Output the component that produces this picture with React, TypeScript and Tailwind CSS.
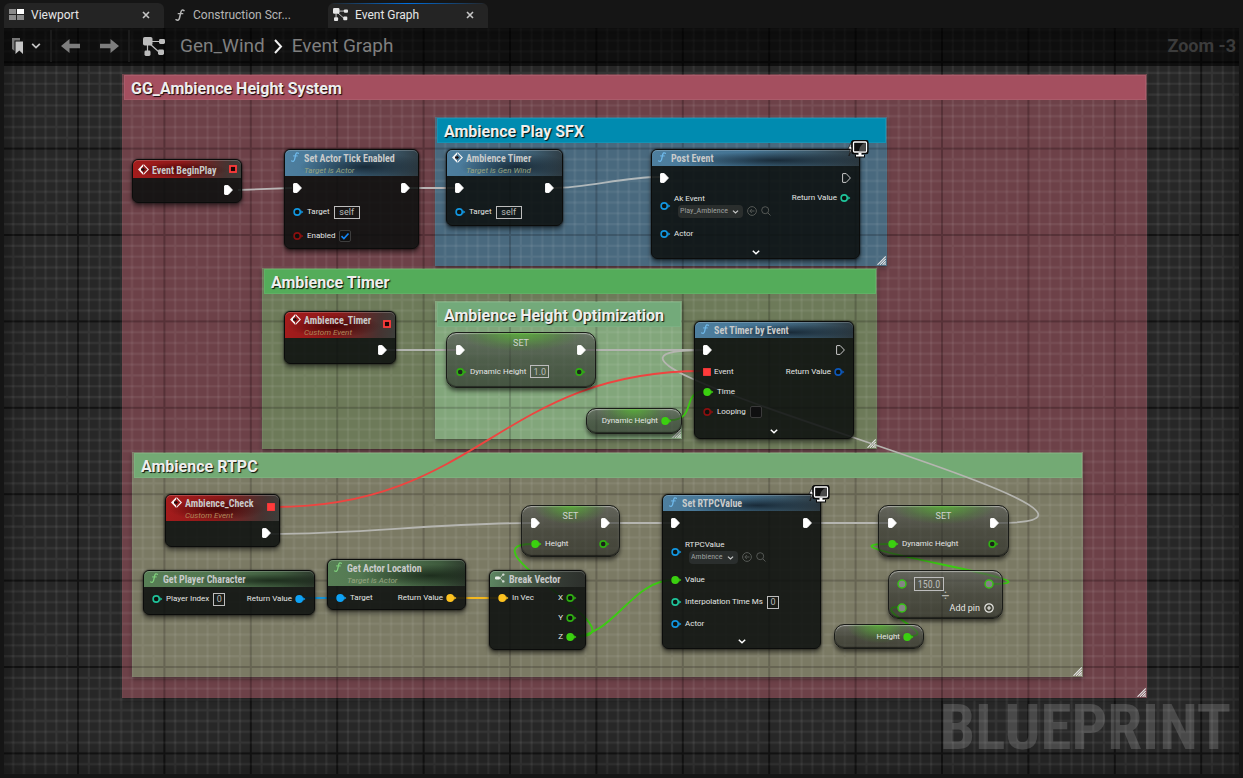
import type { ReactNode } from 'react';

const CONDENSED = "font-['Roboto_Condensed',Roboto,sans-serif]";

/* ---------- icons ---------- */

function GraphIcon({ className }: { className: string }) {
  return (
    <svg viewBox="0 0 22 19" className={className} fill="currentColor" aria-hidden="true">
      <path d="M8 4.5h9M7 7l9 8M4.5 8v6" stroke="currentColor" strokeWidth="1.2" fill="none" />
      <rect x="0" y="0" width="9.5" height="8.5" rx="1.8" />
      <rect x="16" y="2" width="6" height="5" rx="1.4" />
      <rect x="1.5" y="13.5" width="6" height="5.5" rx="1.4" />
      <rect x="15" y="12.5" width="6" height="5.5" rx="1.4" />
    </svg>
  );
}

function FunctionIcon({ className }: { className: string }) {
  return (
    <svg viewBox="0 0 10 12" className={className} fill="none" stroke="currentColor" strokeWidth="1.5" strokeLinecap="round" aria-hidden="true">
      <path d="M9 1.6C7.6.4 6.3 1 5.9 3L4.5 9c-.4 2-1.8 2.7-3.5 1.7" />
      <path d="M3.2 4.7h4.6" strokeWidth="1.2" />
    </svg>
  );
}

function EventIcon() {
  return (
    <svg viewBox="0 0 11 11" className="-mr-px h-[11px] w-[11px] shrink-0" aria-hidden="true">
      <path d="M5 .3 0 5.500 5 10.700V8.200L3 6.300V4.700L5 2.800z" fill="#f4f4f4" />
      <path d="M5.500 .7 10.300 5.500 5.500 10.300" fill="none" stroke="#f4f4f4" strokeWidth="1.100" />
      <path d="M3 4.700h1.600V3.200L7 5.500 4.600 7.800V6.300H3z" fill="#1d0c0c" />
    </svg>
  );
}

function BreakIcon() {
  return (
    <svg viewBox="0 0 10 10" className="h-2.5 w-2.5 shrink-0" aria-hidden="true">
      <rect x="0" y="3.6" width="5" height="2.8" rx="1.2" fill="#e8efe8" />
      <path d="M5 5 8 1.5M5 5l3 3.5" stroke="#b9c4b9" strokeWidth="1" />
      <circle cx="8.3" cy="1.6" r="1.2" fill="#d4ddd4" />
      <circle cx="8.3" cy="8.4" r="1.2" fill="#d4ddd4" />
    </svg>
  );
}

function Chevron({ className }: { className: string }) {
  return (
    <svg viewBox="0 0 8 5" className={className} fill="none" stroke="currentColor" strokeWidth="1.5" aria-hidden="true">
      <path d="m.8.8 3.2 3L7.2.8" />
    </svg>
  );
}

function ExecPin({ hollow = false }: { hollow?: boolean }) {
  return (
    <svg viewBox="0 0 9 10" className="h-2.5 w-[9px] shrink-0" aria-hidden="true">
      <path
        d="M1 .6h3.2L8.4 5 4.2 9.4H1a.4.4 0 0 1-.4-.4V1A.4.4 0 0 1 1 .6z"
        fill={hollow ? 'none' : '#fff'}
        stroke={hollow ? '#c9c9c9' : '#fff'}
        strokeWidth="1"
      />
    </svg>
  );
}

function Pin({ color, filled = false }: { color: string; filled?: boolean }) {
  return (
    <svg viewBox="0 0 11 8" className="h-2 w-[11px] shrink-0" aria-hidden="true">
      <circle cx="4.2" cy="4" r="3.1" fill={filled ? color : '#0a0f0c'} fillOpacity={filled ? 1 : 0.7} stroke={color} strokeWidth="1.6" />
      <path d="M8.2 2.2 10.4 4 8.2 5.8z" fill={color} />
    </svg>
  );
}

function WildPin() {
  return (
    <svg viewBox="0 0 10 10" className="h-2.5 w-2.5 shrink-0" aria-hidden="true">
      <circle cx="5" cy="5" r="4" fill="#858585" stroke="#35c412" strokeWidth="1.4" />
    </svg>
  );
}

function DelegatePin({ filled = false }: { filled?: boolean }) {
  return (
    <svg viewBox="0 0 8 8" className="h-2 w-2 shrink-0" aria-hidden="true">
      <rect x="1" y="1" width="6" height="6" fill={filled ? '#ff3b3b' : '#1d0606'} stroke="#ff3b3b" strokeWidth="1.8" />
    </svg>
  );
}

function Grip() {
  return (
    <svg viewBox="0 0 9 9" className="absolute right-px bottom-px z-20 h-[9px] w-[9px]" stroke="#e9e9e9" strokeWidth="1.1" aria-hidden="true">
      <path d="M.5 8.8 8.8.5M3 8.8 8.8 3M5.500 8.800l3.300-3.300M7.600 8.800l1.200-1.200" />
    </svg>
  );
}

function ServerBadge() {
  return (
    <svg viewBox="0 0 22 18" className="absolute -top-[10px] -right-[10px] h-[18px] w-[22px]" aria-hidden="true">
      <path d="M5 1 1 9h2.4L2 16l4-9H4z" fill="#fff" stroke="#111" strokeWidth=".8" />
      <rect x="5" y=".6" width="16" height="13" rx="1.6" fill="#0c0c0c" stroke="#080808" strokeWidth="1.200" />
      <path d="M10.500 12.500h5v2.300h2.500v2.700H8v-2.700h2.500z" fill="#080808" />
      <rect x="6.5" y="2" width="13" height="10" rx="1" fill="#101010" stroke="#fff" strokeWidth="1.3" />
      <path d="M12 11.300c.5-4.500 2.500-7.500 6.800-8.500v8.500z" fill="#4a4a4a" />
      <path d="M11.500 12.800h3v2h2.500v1.800h-8v-1.800h2.500z" fill="#fff" />
    </svg>
  );
}

/* ---------- node building blocks ---------- */

type Tone = 'event' | 'call' | 'pure' | 'plain';

const TONES: Record<Tone, string> = {
  event:
    'bg-[radial-gradient(ellipse_at_45%_55%,rgba(50,0,0,0.75),transparent_55%),linear-gradient(100deg,#a51c1c_0%,#8e1919_45%,#473331_85%,#3c3f3b_100%)]',
  call:
    'bg-[radial-gradient(ellipse_at_60%_65%,rgba(18,32,44,0.85),transparent_58%),linear-gradient(100deg,#4e7f9f_0%,#447392_45%,#3c5a6c_75%,#2d3940_100%)]',
  pure:
    'bg-[radial-gradient(ellipse_at_75%_60%,rgba(18,30,18,0.75),transparent_50%),linear-gradient(100deg,#587f56_0%,#4f724d_50%,#3e5a3d_80%,#2c382c_100%)]',
  plain: 'bg-[linear-gradient(100deg,#5e8762_0%,#4a604b_35%,#353c35_70%,#2c2f2b_100%)]',
};

interface NodeProps {
  place: string;
  tone: Tone;
  icon: ReactNode;
  title: string;
  subtitle?: string;
  tall?: boolean;
  corner?: ReactNode;
  badge?: boolean;
  expandable?: boolean;
  children: ReactNode;
}

function Node({ place, tone, icon, title, subtitle, tall, corner, badge, expandable, children }: NodeProps) {
  const height = subtitle ? 'h-[26px]' : tall ? 'h-[18px]' : 'h-4';
  const subtitleColor = tone === 'event' ? 'text-[#b08a5c]' : 'text-[#98a581]';
  return (
    <article
      className={`absolute z-30 flex flex-col rounded-md border border-[#0b0c0b] bg-[#0c0f0e]/87 shadow-[0_3px_5px_rgba(0,0,0,0.55),0_0_2px_rgba(0,0,0,0.8)] ${place}`}
    >
      <header className={`flex shrink-0 justify-between rounded-t-[5px] pr-1 pl-[5px] shadow-[inset_0_1px_0_rgba(255,255,255,0.2)] ${height} ${TONES[tone]}`}>
        <div className={`flex gap-1 ${tall ? 'pt-1' : 'pt-0.5'}`}>
          {icon}
          <div>
            <h3 className={`${CONDENSED} text-[10px] leading-[13px] font-bold whitespace-nowrap text-[#c9cbcb]`}>{title}</h3>
            {subtitle && <p className={`text-[8px] leading-[11px] whitespace-nowrap italic ${subtitleColor}`}>{subtitle}</p>}
          </div>
        </div>
        {corner}
      </header>
      <div className="flex flex-1 flex-col px-2">{children}</div>
      {expandable && (
        <button type="button" aria-label={`Expand ${title}`} className="flex h-3.5 items-center justify-center text-white">
          <Chevron className="h-[5px] w-2" />
        </button>
      )}
      {badge && <ServerBadge />}
    </article>
  );
}

function Row({ size = 'h-6', left, right }: { size?: string; left?: ReactNode; right?: ReactNode }) {
  return (
    <div className={`flex shrink-0 items-center justify-between ${size}`}>
      <div className="flex items-center gap-[3px]">{left}</div>
      <div className="flex items-center gap-[3px]">{right}</div>
    </div>
  );
}

function Label({ htmlFor, children }: { htmlFor?: string; children: ReactNode }) {
  const style = 'text-[8px] leading-3 whitespace-nowrap text-[#e4e6e4]';
  return htmlFor ? (
    <label htmlFor={htmlFor} className={style}>
      {children}
    </label>
  ) : (
    <span className={style}>{children}</span>
  );
}

function Field({ id, value, size }: { id: string; value: string; size: string }) {
  return (
    <input
      id={id}
      defaultValue={value}
      className={`ml-px h-[13px] border border-[#bdbdbd] bg-transparent p-0 text-center text-[9px] leading-3 text-[#b9bbb9] outline-none ${size}`}
    />
  );
}

function AssetPicker({ id, label, value, size }: { id: string; label: string; value: string; size: string }) {
  return (
    <div className="flex flex-col pb-0.5">
      <Label htmlFor={id}>{label}</Label>
      <div className="flex items-center gap-1 pl-1 text-[#555855]">
        <div className={`relative h-[13px] rounded-sm bg-[#2a2e2d] ${size}`}>
          <select
            id={id}
            defaultValue={value}
            className={`${CONDENSED} block h-full w-full appearance-none bg-transparent pl-0.5 text-[8px] leading-3 text-[#9b9f9d] outline-none`}
          >
            <option>{value}</option>
          </select>
          <Chevron className="pointer-events-none absolute top-[5px] right-1 h-1 w-[7px] text-[#c8caca]" />
        </div>
        <button type="button" aria-label={`Use selected asset for ${label}`}>
          <svg viewBox="0 0 10 10" className="h-2.5 w-2.5" fill="none" stroke="currentColor" aria-hidden="true">
            <circle cx="5" cy="5" r="4.400" />
            <path d="M7.500 5H3M4.800 3 2.800 5l2 2" />
          </svg>
        </button>
        <button type="button" aria-label={`Browse to ${label}`}>
          <svg viewBox="0 0 10 10" className="h-2.5 w-2.5" fill="none" stroke="currentColor" aria-hidden="true">
            <circle cx="4.200" cy="4.200" r="3.500" />
            <path d="m6.800 6.800 2.700 2.700" />
          </svg>
        </button>
      </div>
    </div>
  );
}

function GlassNode({ place, children, glow = true }: { place: string; children: ReactNode; glow?: boolean }) {
  return (
    <article
      className={`absolute z-30 flex flex-col overflow-hidden rounded-[10px] border border-[#1a1c18] bg-linear-to-b from-[#5a5c58]/70 via-[#2c2e2a]/60 to-[#1c1e1a]/60 shadow-[0_3px_4px_rgba(0,0,0,0.55),inset_0_1px_1px_rgba(255,255,255,0.45),inset_0_-1px_1px_rgba(0,0,0,0.5)] ${place}`}
    >
      {glow && (
        <div className="pointer-events-none absolute inset-x-3 top-0 h-[18px] bg-[radial-gradient(ellipse_at_50%_0%,rgba(84,190,44,0.7),rgba(70,150,40,0.25)_50%,transparent_72%)]" />
      )}
      <div className="relative flex flex-1 flex-col">{children}</div>
    </article>
  );
}

function SetNode({ place, left, right }: { place: string; left: ReactNode; right: ReactNode }) {
  return (
    <GlassNode place={place}>
      <div className="relative flex h-[26px] shrink-0 items-end justify-between px-[9px] pb-1">
        <ExecPin />
        <h3 className="absolute inset-x-0 top-1 text-center text-[9px] leading-3 text-[#d0d3ce]">SET</h3>
        <ExecPin />
      </div>
      <div className="flex items-center justify-between px-[9px] pt-1.5">
        <div className="flex items-center gap-[3px]">{left}</div>
        {right}
      </div>
    </GlassNode>
  );
}

/* ---------- comment boxes ---------- */

function Comment({ place, body, bar, title }: { place: string; body: string; bar: string; title: string }) {
  return (
    <section className={`absolute ${place}`}>
      <div className={`absolute inset-0 shadow-[0_2px_4px_rgba(0,0,0,0.45)] ${body}`} />
      <header className={`relative z-20 m-px ml-0.5 flex h-[25px] items-center px-[7px] pt-0.5 shadow-[inset_0_0_0_1px_rgba(255,255,255,0.07)] ${bar}`}>
        <h2 className="text-base leading-5 font-bold whitespace-nowrap text-[#eeeeee] [text-shadow:1px_1px_1px_rgba(0,0,0,0.9)]">{title}</h2>
      </header>
      <Grip />
    </section>
  );
}

function Grid({ base = false }: { base?: boolean }) {
  const id = base ? 'grid-base' : 'grid-lines';
  const steps = [1, 2, 3, 4, 5, 6, 7];
  return (
    <svg className={`absolute inset-0 h-full w-full ${base ? '' : 'z-10'}`} aria-hidden="true">
      <defs>
        <pattern id={id} x="78" y="148.600" width="86.400" height="86.400" patternUnits="userSpaceOnUse">
          {!base &&
            steps.map((n) => (
              <path key={n} d={`M${n * 10.8} 0V86.4M0 ${n * 10.8}H86.4`} stroke="#fff" strokeOpacity=".065" strokeWidth="2" />
            ))}
          <path d="M0 0V86.400M0 0H86.400M86.400 0V86.400M0 86.400H86.400" stroke="#000" strokeOpacity={base ? 0.45 : 0.16} strokeWidth="2" />
        </pattern>
      </defs>
      <rect width="100%" height="100%" fill={`url(#${id})`} />
    </svg>
  );
}

const WIRES: { d: string; color: string }[] = [
  { d: 'M238 190 292 188', color: '#b9b5b5' },
  { d: 'M409 188H455', color: '#b9b5b5' },
  { d: 'M552 188C590 188 620 177 660 177', color: '#b0b8bb' },
  { d: 'M386 350H456', color: '#b3b5b0' },
  { d: 'M584 350H704', color: '#b3b5b0' },
  { d: 'M270 534C360 534 440 523 532 523', color: '#b5b5b0' },
  { d: 'M608 523H671', color: '#b5b5b0' },
  { d: 'M811 523H888', color: '#b5b5b0' },
  { d: 'M998 523C1213 523 488 350 703 350', color: '#b5b5b0' },
  { d: 'M274 507C480 507 500 371 703 371', color: '#ee4440' },
  { d: 'M670 420C698 420 680 391 706 391', color: '#3bcb12' },
  { d: 'M571 637C615 637 630 580 674 580', color: '#3bcb12' },
  { d: 'M575 637C649 637 458 544 532 544', color: '#3bcb12' },
  { d: 'M300 598H338', color: '#1496dc' },
  { d: 'M453 598H500', color: '#f4b81f' },
  { d: 'M992 584C1077 584 803 544 888 544', color: '#3bcb12' },
  { d: 'M910 636C940 636 868 607 899 607', color: '#3bcb12' },
];

const GREEN = '#3bd010';
const BLUE = '#1296e0';
const TEAL = '#1fc39a';

function BlueprintGraph() {
  return (
    <div className="absolute -top-7 -left-1 h-[1200px] w-[2400px]">
      <Grid base />

      <Comment place="top-[74px] left-[122px] h-[624px] w-[1025px]" body="bg-[#9c535f]/60" bar="bg-[#a44f5f]" title="GG_Ambience Height System" />
      <Comment place="top-[117px] left-[435px] h-[149px] w-[452px]" body="bg-[#3284a3]/60" bar="bg-[#008bb0]" title="Ambience Play SFX" />
      <Comment place="top-[268px] left-[262px] h-[181px] w-[615px]" body="bg-[#6ea066]/60" bar="bg-[#54ac5a]" title="Ambience Timer" />
      <Comment place="top-[301px] left-[435px] h-[138px] w-[247px]" body="bg-[#91c393]/60" bar="bg-[#73aa7a]" title="Ambience Height Optimization" />
      <Comment place="top-[452px] left-[132px] h-[225px] w-[951px]" body="bg-[#85a078]/60" bar="bg-[#73aa74]" title="Ambience RTPC" />

      <Grid />

      <svg className="pointer-events-none absolute inset-0 z-20 h-full w-full" fill="none" aria-hidden="true">
        {WIRES.map((wire) => (
          <path key={wire.d} d={wire.d} stroke={wire.color} strokeWidth="1.800" />
        ))}
      </svg>

      <Node
        place="top-[159px] left-[132px] h-11 w-[110px]"
        tone="event"
        icon={<EventIcon />}
        title="Event BeginPlay"
        tall
        corner={
          <div className="pt-[5px]">
            <DelegatePin />
          </div>
        }
      >
        <Row right={<ExecPin />} />
      </Node>

      <Node
        place="top-[149px] left-[284px] h-[100px] w-[135px]"
        tone="call"
        icon={<FunctionIcon className="h-2.5 w-2.5 text-[#6fb9ea]" />}
        title="Set Actor Tick Enabled"
        subtitle="Target is Actor"
      >
        <Row left={<ExecPin />} right={<ExecPin />} />
        <Row
          left={
            <>
              <Pin color={BLUE} />
              <Label htmlFor="tick-target">Target</Label>
              <Field id="tick-target" value="self" size="w-[26px]" />
            </>
          }
        />
        <Row
          left={
            <>
              <Pin color="#8b0f0f" />
              <Label htmlFor="tick-enabled">Enabled</Label>
              <span className="relative flex h-3 w-3">
                <input
                  id="tick-enabled"
                  type="checkbox"
                  defaultChecked
                  className="peer h-3 w-3 appearance-none rounded-[2px] border border-[#3d3d3d] bg-[#111]"
                />
                <svg viewBox="0 0 12 12" className="pointer-events-none absolute inset-0 hidden h-3 w-3 peer-checked:block" fill="none" stroke="#1386f5" strokeWidth="1.600" aria-hidden="true">
                  <path d="m2.500 6.200 2.400 2.300L9.500 3.500" />
                </svg>
              </span>
            </>
          }
        />
      </Node>

      <Node place="top-[149px] left-[446px] h-[77px] w-[117px]" tone="call" icon={<EventIcon />} title="Ambience Timer" subtitle="Target is Gen Wind">
        <Row left={<ExecPin />} right={<ExecPin />} />
        <Row
          left={
            <>
              <Pin color={BLUE} />
              <Label htmlFor="timer-target">Target</Label>
              <Field id="timer-target" value="self" size="w-[26px]" />
            </>
          }
        />
      </Node>

      <Node
        place="top-[149px] left-[651px] h-[110px] w-[209px]"
        tone="call"
        icon={<FunctionIcon className="h-2.5 w-2.5 text-[#6fb9ea]" />}
        title="Post Event"
        badge
        expandable
      >
        <Row left={<ExecPin />} right={<ExecPin hollow />} />
        <div className="flex h-8 justify-between">
          <div className="flex items-center gap-[3px]">
            <Pin color={BLUE} />
            <AssetPicker id="ak-event" label="Ak Event" value="Play_Ambience" size="w-[65px]" />
          </div>
          <div className="flex h-4 items-center gap-[3px]">
            <Label>Return Value</Label>
            <Pin color={TEAL} />
          </div>
        </div>
        <Row
          left={
            <>
              <Pin color={BLUE} />
              <Label>Actor</Label>
            </>
          }
        />
      </Node>

      <Node
        place="top-[311px] left-[284px] h-[53px] w-[112px]"
        tone="event"
        icon={<EventIcon />}
        title="Ambience_Timer"
        subtitle="Custom Event"
        corner={
          <div className="pt-2">
            <DelegatePin />
          </div>
        }
      >
        <Row right={<ExecPin />} />
      </Node>

      <SetNode
        place="top-[332px] left-[446px] h-14 w-[150px]"
        left={
          <>
            <Pin color="#2fae12" />
            <Label htmlFor="set-height">Dynamic Height</Label>
            <Field id="set-height" value="1.0" size="w-[19px]" />
          </>
        }
        right={<Pin color="#2fae12" />}
      />

      <GlassNode place="top-[408px] left-[586px] h-[26px] w-[96px]">
        <div className="flex flex-1 items-center justify-end gap-[3px] pr-[9px]">
          <Label>Dynamic Height</Label>
          <Pin color={GREEN} filled />
        </div>
      </GlassNode>

      <Node
        place="top-[321px] left-[694px] h-[118px] w-[160px]"
        tone="call"
        icon={<FunctionIcon className="h-2.5 w-2.5 text-[#6fb9ea]" />}
        title="Set Timer by Event"
        expandable
      >
        <Row left={<ExecPin />} right={<ExecPin hollow />} />
        <Row
          size="h-5"
          left={
            <>
              <DelegatePin filled />
              <Label>Event</Label>
            </>
          }
          right={
            <>
              <Label>Return Value</Label>
              <Pin color="#0d57b8" />
            </>
          }
        />
        <Row
          size="h-5"
          left={
            <>
              <Pin color={GREEN} filled />
              <Label>Time</Label>
            </>
          }
        />
        <Row
          size="h-5"
          left={
            <>
              <Pin color="#8b0f0f" />
              <Label htmlFor="looping">Looping</Label>
              <input id="looping" type="checkbox" className="ml-px h-3 w-3 appearance-none rounded-[2px] border border-[#3a3a3a] bg-[#0f0f10]" />
            </>
          }
        />
      </Node>

      <Node
        place="top-[494px] left-[165px] h-[53px] w-[115px]"
        tone="event"
        icon={<EventIcon />}
        title="Ambience_Check"
        subtitle="Custom Event"
        corner={
          <div className="pt-2">
            <DelegatePin filled />
          </div>
        }
      >
        <Row right={<ExecPin />} />
      </Node>

      <Node
        place="top-[570px] left-[143px] h-[45px] w-[172px]"
        tone="pure"
        icon={<FunctionIcon className="h-2.5 w-2.5 text-[#7fd07c]" />}
        title="Get Player Character"
      >
        <Row
          left={
            <>
              <Pin color={TEAL} />
              <Label htmlFor="player-index">Player Index</Label>
              <Field id="player-index" value="0" size="w-3" />
            </>
          }
          right={
            <>
              <Label>Return Value</Label>
              <Pin color="#0fa2f4" filled />
            </>
          }
        />
      </Node>

      <Node
        place="top-[559px] left-[327px] h-[51px] w-[139px]"
        tone="pure"
        icon={<FunctionIcon className="h-2.5 w-2.5 text-[#7fd07c]" />}
        title="Get Actor Location"
        subtitle="Target is Actor"
      >
        <Row
          left={
            <>
              <Pin color="#0fa2f4" filled />
              <Label>Target</Label>
            </>
          }
          right={
            <>
              <Label>Return Value</Label>
              <Pin color="#fdc220" filled />
            </>
          }
        />
      </Node>

      <Node place="top-[570px] left-[489px] h-20 w-[97px]" tone="plain" icon={<BreakIcon />} title="Break Vector">
        <Row
          size="h-[22px]"
          left={
            <>
              <Pin color="#fdc220" filled />
              <Label>In Vec</Label>
            </>
          }
          right={
            <>
              <Label>X</Label>
              <Pin color="#2fae12" />
            </>
          }
        />
        <Row
          size="h-[18px]"
          right={
            <>
              <Label>Y</Label>
              <Pin color="#2fae12" />
            </>
          }
        />
        <Row
          size="h-5"
          right={
            <>
              <Label>Z</Label>
              <Pin color={GREEN} filled />
            </>
          }
        />
      </Node>

      <SetNode
        place="top-[505px] left-[521px] h-[52px] w-[99px]"
        left={
          <>
            <Pin color={GREEN} filled />
            <Label>Height</Label>
          </>
        }
        right={<Pin color="#2fae12" />}
      />

      <Node
        place="top-[494px] left-[662px] h-[155px] w-[159px]"
        tone="call"
        icon={<FunctionIcon className="h-2.5 w-2.5 text-[#6fb9ea]" />}
        title="Set RTPCValue"
        badge
        expandable
      >
        <Row left={<ExecPin />} right={<ExecPin />} />
        <div className="flex h-[34px] items-center gap-[3px]">
          <Pin color={BLUE} />
          <AssetPicker id="rtpc-value" label="RTPCValue" value="Ambience" size="w-[49px]" />
        </div>
        <Row
          size="h-[22px]"
          left={
            <>
              <Pin color={GREEN} filled />
              <Label>Value</Label>
            </>
          }
        />
        <Row
          size="h-[22px]"
          left={
            <>
              <Pin color={TEAL} />
              <Label htmlFor="interpolation">Interpolation Time Ms</Label>
              <Field id="interpolation" value="0" size="w-3" />
            </>
          }
        />
        <Row
          size="h-[22px]"
          left={
            <>
              <Pin color={BLUE} />
              <Label>Actor</Label>
            </>
          }
        />
      </Node>

      <SetNode
        place="top-[505px] left-[878px] h-[52px] w-[131px]"
        left={
          <>
            <Pin color={GREEN} filled />
            <Label>Dynamic Height</Label>
          </>
        }
        right={<Pin color="#2fae12" />}
      />

      <GlassNode place="top-[570px] left-[888px] h-[49px] w-[115px]" glow={false}>
        <div className="flex flex-1 flex-col justify-between px-2 pt-1.5 pb-1">
          <div className="flex items-center justify-between">
            <div className="flex items-center gap-[7px]">
              <WildPin />
              <input
                aria-label="Divisor"
                defaultValue="150.0"
                className={`${CONDENSED} h-3.5 w-[30px] border border-[#bdbdbd] bg-transparent p-0 text-center text-[10px] leading-3 text-[#b9bbb9] outline-none`}
              />
            </div>
            <WildPin />
          </div>
          <div className="flex items-center justify-between">
            <WildPin />
            <button type="button" className="flex items-center gap-1 text-[9px] leading-3 text-[#e6e6e2]">
              Add pin
              <svg viewBox="0 0 10 10" className="h-2.5 w-2.5" fill="none" stroke="currentColor" strokeWidth="1.200" aria-hidden="true">
                <circle cx="5" cy="5" r="4.200" />
                <path d="M5 3v4M3 5h4" />
              </svg>
            </button>
          </div>
        </div>
        <span className="absolute inset-x-0 top-4 text-center text-sm leading-4 text-[#b4b4ae]">÷</span>
      </GlassNode>

      <GlassNode place="top-[624px] left-[834px] h-[25px] w-[90px]">
        <div className="flex flex-1 items-center justify-end gap-[3px] pr-[9px]">
          <Label>Height</Label>
          <Pin color={GREEN} filled />
        </div>
      </GlassNode>
    </div>
  );
}

/* ---------- chrome ---------- */

function CloseIcon() {
  return (
    <svg viewBox="0 0 8 8" className="h-2 w-2" stroke="#c6c6c6" strokeWidth="1.600" aria-hidden="true">
      <path d="m1 1 6 6M7 1 1 7" />
    </svg>
  );
}

function ArrowIcon({ className }: { className: string }) {
  return (
    <svg viewBox="0 0 19 14" className={className} fill="#7d7d7d" aria-hidden="true">
      <path d="M0 7 8.500 0v4.800H19v4.400H8.500V14z" />
    </svg>
  );
}

export default function App() {
  return (
    <div className="flex h-screen flex-col overflow-hidden bg-[#151515] font-['Roboto',sans-serif]">
      <nav className="flex h-7 shrink-0 items-end px-1" aria-label="Editor tabs">
        <div className="flex h-[25px] w-40 items-center justify-between rounded-t-md bg-[#242424] pr-3.5 pb-0.5 pl-[5px]">
          <button type="button" className="flex items-center gap-[7px] text-xs text-[#e6e6e6]">
            <svg viewBox="0 0 15 11" className="h-[11px] w-[15px]" aria-hidden="true">
              <path d="M0 0h7v5H0zM0 6h7v5H0zM8 6h7v5H8z" fill="#8b8b8b" />
              <path d="M8 0h7v5H8z" fill="#fff" />
            </svg>
            Viewport
          </button>
          <button type="button" aria-label="Close Viewport">
            <CloseIcon />
          </button>
        </div>
        <div className="flex h-[25px] w-[164px] items-center pb-0.5 pl-2.5">
          <button type="button" className="flex items-center gap-[7px] text-xs text-[#b5b5b5]">
            <FunctionIcon className="h-3 w-3" />
            Construction Scr...
          </button>
        </div>
        <div className="flex h-[25px] w-40 items-center justify-between rounded-t-md bg-[#242424] bg-linear-to-r from-transparent via-[#0070e0] to-transparent bg-[length:100%_1px] bg-no-repeat pr-3.5 pb-0.5 pl-[5px]">
          <button type="button" className="flex items-center gap-[7px] text-xs text-[#e6e6e6]">
            <GraphIcon className="h-[13px] w-[15px]" />
            Event Graph
          </button>
          <button type="button" aria-label="Close Event Graph">
            <CloseIcon />
          </button>
        </div>
      </nav>

      <main className="relative mx-1 mb-1 flex-1 overflow-hidden bg-[#272727]">
        <BlueprintGraph />

        <div className="pointer-events-none absolute inset-0 z-30 shadow-[inset_0_0_30px_rgba(0,0,0,0.45)]" />

        <div className="relative z-40 flex h-[38px] items-center bg-black/60 pr-[3px] pb-0.5 pl-2">
          <button type="button" aria-label="Bookmarks" className="flex h-full items-center gap-[7px] text-[#c4c4c4]">
            <svg viewBox="0 0 12 16" className="h-4 w-3" aria-hidden="true">
              <path d="M0 0h8v2.500H2.500V13L0 11z" fill="#777" />
              <path d="M3.500 3.500H11V16l-3.700-3.500L3.500 16z" fill="#c6c6c6" />
            </svg>
            <Chevron className="h-1.5 w-2.5" />
          </button>
          <div className="ml-[9px] h-8 w-0.5 bg-[#1b1b1b]" />
          <button type="button" aria-label="Back" className="ml-[9px]">
            <ArrowIcon className="h-3.5 w-[19px]" />
          </button>
          <button type="button" aria-label="Forward" className="ml-5">
            <ArrowIcon className="h-3.5 w-[19px] rotate-180" />
          </button>
          <div className="ml-[9px] h-8 w-0.5 bg-[#1b1b1b]" />
          <nav aria-label="Breadcrumb" className="ml-[13px] flex items-center text-[#7f7f7f]">
            <GraphIcon className="h-[19px] w-[22px] text-[#bdbdbd]" />
            <a href="#gen-wind" className="ml-[15px] text-[19px] leading-6">
              Gen_Wind
            </a>
            <svg viewBox="0 0 9 15" className="mx-[9px] h-[15px] w-[9px]" fill="none" stroke="#f0f0f0" strokeWidth="2" aria-hidden="true">
              <path d="m1 1 6 6.500L1 14" />
            </svg>
            <a href="#event-graph" className="text-[19px] leading-6">
              Event Graph
            </a>
          </nav>
          <p className="ml-auto text-lg leading-6 font-bold text-[#3b3b3b]">Zoom -3</p>
        </div>

        <p className={`${CONDENSED} pointer-events-none absolute right-2 bottom-[11px] z-40 text-[63px] leading-[70px] font-bold text-white/16`}>BLUEPRINT</p>
      </main>
    </div>
  );
}
